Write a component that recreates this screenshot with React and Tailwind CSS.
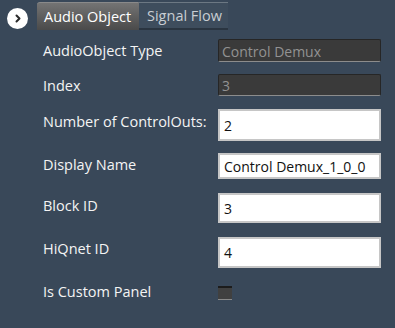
import React from "react";

const font = { fontFamily: '"Open Sans", "Noto Sans", sans-serif' };

function Label({ children, className = "pt-[2px]" }) {
  return (
    <div className={"w-[175px] shrink-0 text-[14.5px] leading-[20px] text-[#f4f4f4] " + className}>
      {children}
    </div>
  );
}

function ReadOnly({ value, h }) {
  return (
    <div
      className={
        "w-[163px] rounded-[2px] border border-[#262626] border-b-[#8c8c8c] bg-[#3a3a3a] pl-[3px] pt-[2px] text-[14px] leading-[18px] text-[#929292] flex items-center " +
        h
      }
    >
      {value}
    </div>
  );
}

function Field({ value, h }) {
  return (
    <div
      className={
        "w-[163px] border-2 border-[#c6c6c6] bg-white pl-[4px] pt-[1px] text-[14px] leading-[18px] text-[#111] flex items-center " +
        h
      }
    >
      {value}
    </div>
  );
}

export default function App() {
  return (
    <div className="w-[395px] h-[328px] bg-[#394859] overflow-hidden" style={font}>
      {/* Header */}
      <div className="flex items-start pt-[2px]">
        <div className="ml-[7px] mt-[6px] w-[21px] h-[21px] rounded-full bg-white flex items-center justify-center">
          <svg width="8" height="9" viewBox="0 0 8 9">
            <path d="M2.5 1.5 L5.5 4.5 L2.5 7.5" fill="none" stroke="#2a2a2a" strokeWidth="2" strokeLinecap="round" strokeLinejoin="round" />
          </svg>
        </div>
        <div className="ml-[9px] flex">
          <div className="w-[102px] h-[28px] rounded-tl-[3px] rounded-tr-[1px] border-t border-[#8a8a8a] bg-gradient-to-b from-[#747474] to-[#4a4a4a] text-white text-[14.5px] leading-[20px] pl-[7px] pt-[4px]">
            Audio Object
          </div>
          <div className="w-[89px] h-[28px] border-t border-[#6c7883] border-b-2 border-b-[#2a3541] bg-[#3e4d5d] text-[#c9ced3] text-[14.5px] leading-[20px] pl-[8px] pt-[3px]">
            Signal Flow
          </div>
        </div>
      </div>

      {/* Rows */}
      <div className="pl-[43px] mt-[9px] flex flex-col">
        <div className="flex">
          <Label>AudioObject Type</Label>
          <ReadOnly value="Control Demux" h="h-[23px]" />
        </div>
        <div className="flex mt-[12px]">
          <Label>Index</Label>
          <ReadOnly value="3" h="h-[22px]" />
        </div>
        <div className="flex mt-[13px]">
          <Label className="pt-[3px]">Number of ControlOuts:</Label>
          <Field value="2" h="h-[32px]" />
        </div>
        <div className="flex mt-[12px]">
          <Label>Display Name</Label>
          <Field value="Control Demux_1_0_0" h="h-[26px]" />
        </div>
        <div className="flex mt-[14px]">
          <Label className="pt-[3px]">Block ID</Label>
          <Field value="3" h="h-[30px]" />
        </div>
        <div className="flex mt-[14px]">
          <Label>HiQnet ID</Label>
          <Field value="4" h="h-[31px]" />
        </div>
        <div className="flex items-center mt-[14px] h-[20px]">
          <Label className="pt-0">Is Custom Panel</Label>
          <div className="w-[14px] h-[14px] mt-[2px] border-t-2 border-[#1c1c1c] border-b border-b-[#8a8a8a] bg-[#404040]" />
        </div>
      </div>
    </div>
  );
}
